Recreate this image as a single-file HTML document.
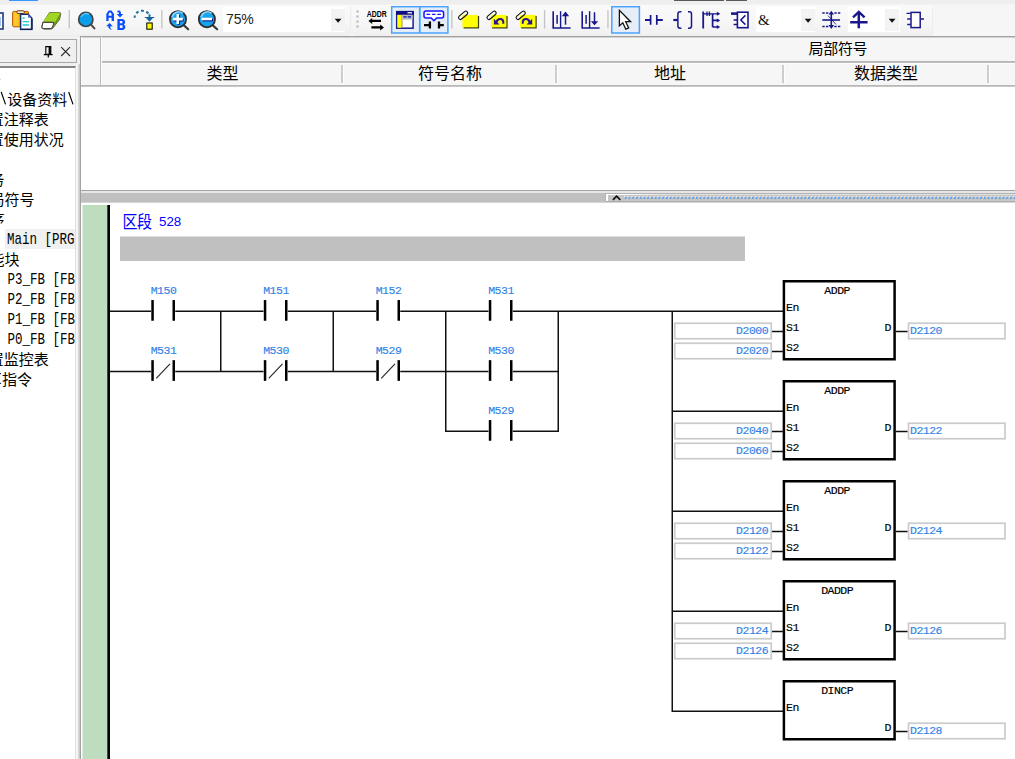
<!DOCTYPE html>
<html><head><meta charset="utf-8"><title>ISPSoft</title>
<style>
html,body{margin:0;padding:0}
body{width:1015px;height:759px;overflow:hidden;position:relative;background:#f0f0f0;font-family:"Liberation Sans",sans-serif}
div{position:absolute;box-sizing:border-box}
svg{position:absolute;left:0;top:0;overflow:hidden}
.tb{top:4.500px;height:30.500px;background:linear-gradient(#fafafa,#f7f7f7 55%,#f0f0f0);border-radius:0 3px 3px 0;box-shadow:1px 1px 1px rgba(0,0,0,.04)}
.cb{top:7px;height:25px;background:#fff}
.cbb{top:9px;height:22px;width:14px;background:#f3f3f3}
</style></head><body>
<!-- top strip -->
<div style="left:0;top:0;width:1015px;height:36px;background:linear-gradient(#eeeeee 0,#efefef 4px,#f6f6f6 5px,#f6f6f6 100%)"></div>
<div style="left:9px;top:0;width:28.500px;height:1.100px;background:#3797ff"></div>
<div style="left:674px;top:0;width:50px;height:1px;background:#5a5a5a"></div>
<div style="left:726px;top:0;width:21px;height:1px;background:#5a5a5a"></div>
<!-- toolbars -->
<div class="tb" style="left:-4px;width:354px"></div>
<div class="tb" style="left:352px;width:580px;border-radius:3px"></div>
<div class="cb" style="left:223px;width:122px"></div><div class="cbb" style="left:331px"></div>
<div class="cb" style="left:756px;width:59px"></div><div class="cbb" style="left:801px"></div>
<div class="cb" style="left:848px;width:52px"></div><div class="cbb" style="left:885px"></div>
<div style="left:226px;top:10px;font-size:14px;line-height:18px;color:#222;letter-spacing:-.1px">75%</div>
<div style="left:758px;top:10px;font-family:'Liberation Serif',serif;font-size:15px;line-height:20px;color:#111">&amp;</div>
<!-- left panel -->
<div style="left:-2px;top:39px;width:79px;height:24px;border:1px solid #a9a9a9;border-right-width:1.500px;border-bottom-width:1.500px;background:#f0f0f0"></div>
<div style="left:-2px;top:66px;width:78px;height:700px;background:#fff;border-top:2px solid #868686;border-right:1px solid #e0e0e0"></div>
<!-- main table panel -->
<div style="left:76.300px;top:64px;width:3.700px;height:700px;background:linear-gradient(90deg,#f8f8f8 0,#f6f6f6 1.400px,#d6d6d6 2.600px,#c6c6c6 3.700px)"></div>
<div style="left:80px;top:36px;width:940px;height:155px;background:#fff;border:1px solid #a2a2a2"></div>
<div style="left:81px;top:37px;width:934px;height:48px;background:#f6f6f6;border-top:1px solid #d2d2d2"></div>
<div style="left:100px;top:37px;width:1px;height:48px;background:#bdbdbd"></div>
<div style="left:100px;top:61px;width:915px;height:2px;background:linear-gradient(#b2b2b2,#c4c4c4)"></div><div style="left:101px;top:63px;width:914px;height:1px;background:#fcfcfc"></div><div style="left:101px;top:37px;width:1px;height:48px;background:#fdfdfd"></div><div style="left:81px;top:37px;width:1px;height:48px;background:#fdfdfd"></div>
<div style="left:81px;top:85px;width:934px;height:2px;background:linear-gradient(#b0b0b0,#cfcfcf)"></div>
<div style="left:341.4px;top:65px;width:1.800px;height:18px;background:#cdcdcd"></div><div style="left:343.2px;top:65px;width:1px;height:18px;background:#fdfdfd"></div>
<div style="left:555.4px;top:65px;width:1.800px;height:18px;background:#cdcdcd"></div><div style="left:557.2px;top:65px;width:1px;height:18px;background:#fdfdfd"></div>
<div style="left:782.4px;top:65px;width:1.800px;height:18px;background:#cdcdcd"></div><div style="left:784.2px;top:65px;width:1px;height:18px;background:#fdfdfd"></div>
<div style="left:987.4px;top:65px;width:1.800px;height:18px;background:#cdcdcd"></div><div style="left:989.2px;top:65px;width:1px;height:18px;background:#fdfdfd"></div>
<!-- splitter -->
<div style="left:81px;top:191px;width:934px;height:2px;background:#e6e6e6"></div>
<div style="left:81px;top:193px;width:934px;height:9px;background:#c0c0c0"></div>
<div style="left:605px;top:192.500px;width:420px;height:10.700px;background:#c6c6c6;border-top:1px solid #b2b2b2;border-left:1px solid #b2b2b2;border-bottom:2px solid #b0b0b0"></div>
<div style="left:606px;top:193.600px;width:414px;height:1.300px;background:linear-gradient(90deg,#fff,#fff 14px,#e2e2e2 60px)"></div>
<div style="left:606px;top:193.600px;width:1.900px;height:7.500px;background:#fff"></div>
<!-- ladder panel -->
<div style="left:80px;top:36px;width:1px;height:730px;background:#a2a2a2;z-index:3"></div>
<div style="left:80px;top:202px;width:940px;height:560px;background:#fff;border-left:1px solid #a2a2a2;border-top:1px solid #d4d4d4"></div>
<svg width="1015" height="759" viewBox="0 0 1015 759"><defs><pattern id="dots" x="623.9" y="196" width="3.740" height="4" patternUnits="userSpaceOnUse"><rect x="0" y="0.100" width="1.500" height="1.500" fill="#f6f6f6"/><rect x=".800" y=".900" width="1.700" height="2.100" fill="#5a9fe8"/></pattern></defs>
<rect x="623.900" y="196" width="392" height="4" fill="url(#dots)"/>
<svg x="0" y="68" width="75" height="691" viewBox="0 68 75 691"><path d="M1.200 92l4.300 12.400M68.700 92l4.300 12.400" stroke="#000" stroke-width="1.150"/><text x="7.30" y="104.70" font-family="'Liberation Sans','Noto Sans CJK SC',sans-serif" font-size="15" fill="#000">设备资料</text><rect x="0" y="78.800" width=".8" height="1.200" fill="#ccc"/><text x="-11.30" y="124.70" font-family="'Liberation Sans','Noto Sans CJK SC',sans-serif" font-size="15" fill="#000">置注释表</text><text x="-11.30" y="144.70" font-family="'Liberation Sans','Noto Sans CJK SC',sans-serif" font-size="15" fill="#000">置使用状况</text><text x="-10.50" y="184.70" font-family="'Liberation Sans','Noto Sans CJK SC',sans-serif" font-size="15" fill="#000">务</text><text x="-10.50" y="204.70" font-family="'Liberation Sans','Noto Sans CJK SC',sans-serif" font-size="15" fill="#000">局符号</text><text x="-10.50" y="224.70" font-family="'Liberation Sans','Noto Sans CJK SC',sans-serif" font-size="15" fill="#000">序</text><rect x="5" y="229" width="70" height="20" fill="#f0f0f0"/><text x="7.00" y="244.20" font-family="'Liberation Mono'" font-size="16.600" textLength="67.50" lengthAdjust="spacingAndGlyphs" fill="#000">Main [PRG</text><text x="-10.50" y="264.70" font-family="'Liberation Sans','Noto Sans CJK SC',sans-serif" font-size="15" fill="#000">能块</text><text x="7.50" y="284.20" font-family="'Liberation Mono'" font-size="16.600" textLength="67.50" lengthAdjust="spacingAndGlyphs" fill="#000">P3_FB [FB</text><text x="7.50" y="304.20" font-family="'Liberation Mono'" font-size="16.600" textLength="67.50" lengthAdjust="spacingAndGlyphs" fill="#000">P2_FB [FB</text><text x="7.50" y="324.20" font-family="'Liberation Mono'" font-size="16.600" textLength="67.50" lengthAdjust="spacingAndGlyphs" fill="#000">P1_FB [FB</text><text x="7.50" y="344.20" font-family="'Liberation Mono'" font-size="16.600" textLength="67.50" lengthAdjust="spacingAndGlyphs" fill="#000">P0_FB [FB</text><text x="-11.30" y="364.70" font-family="'Liberation Sans','Noto Sans CJK SC',sans-serif" font-size="15" fill="#000">置监控表</text><text x="-5.50" y="384.20" font-family="'Liberation Mono'" font-size="16.600" textLength="7.50" lengthAdjust="spacingAndGlyphs" fill="#000">I</text><text x="2.00" y="384.70" font-family="'Liberation Sans','Noto Sans CJK SC',sans-serif" font-size="15" fill="#000">指令</text></svg>
<g><text x="808.50" y="54.20" font-family="'Liberation Sans','Noto Sans CJK SC',sans-serif" font-size="15" letter-spacing="-0.3" fill="#000">局部符号</text><text x="206.50" y="78.58" font-family="'Liberation Sans','Noto Sans CJK SC',sans-serif" font-size="16" fill="#000">类型</text><text x="418.00" y="78.58" font-family="'Liberation Sans','Noto Sans CJK SC',sans-serif" font-size="16" fill="#000">符号名称</text><text x="654.00" y="78.58" font-family="'Liberation Sans','Noto Sans CJK SC',sans-serif" font-size="16" fill="#000">地址</text><text x="854.00" y="78.58" font-family="'Liberation Sans','Noto Sans CJK SC',sans-serif" font-size="16" fill="#000">数据类型</text></g>
<g><rect x="68.6" y="10" width="1.3" height="18.5" fill="#c3c3c3"/><rect x="161.2" y="10" width="1.3" height="18.5" fill="#c3c3c3"/><rect x="451.2" y="10" width="1.3" height="18.5" fill="#c3c3c3"/><rect x="543.9" y="10" width="1.3" height="18.5" fill="#c3c3c3"/><rect x="607.3" y="10" width="1.3" height="18.5" fill="#c3c3c3"/><rect x="-3" y="13" width="6" height="16" fill="#fff" stroke="#1c3a7a" stroke-width="1.6"/><rect x="-1" y="17" width="2" height="9" fill="#9fc4ee"/><rect x="12.6" y="11.4" width="16" height="15.4" rx="1.5" fill="#ffb400" stroke="#b35a00" stroke-width="1"/><rect x="13.6" y="12.4" width="5" height="13.4" fill="#ffcf40" opacity=".7"/><rect x="16.8" y="10.8" width="7.6" height="2.7" rx="1.2" fill="#f3e6dc" stroke="#7a3b12" stroke-width="1"/><path d="M20.6 14.2h7.4l3.6 3.6v11.4h-11z" fill="#fff" stroke="#16316f" stroke-width="1.5"/><path d="M28 14.2v3.6h3.6z" fill="#5a6ccf"/><path d="M22.6 18h2.2M22.6 21.6h6.4M22.6 25h6.4" stroke="#22c8cf" stroke-width="1.4"/><path d="M20 29.6h12.2v-11" fill="none" stroke="#0c1c4c" stroke-width="1"/><path d="M49.500 12.600h10.200q1.400 0 1 1.600l-1.200 5.400-6.600 8.400q-1 1-2.400 1h-6.400q-3 0-2.200-2.600l1-3.400z" fill="#6f9e14" stroke="#5f6b43" stroke-width="1"/><path d="M49.600 12.800h9.800q1 0 .6 1l-4.800 8h-12z" fill="#a2d622"/><path d="M43 22.400h9.600q1.600.3.900 2l-1 2.600q-.6 1.600-2 1.600h-6.400q-2.600 0-2-2.400z" fill="#fff" stroke="#4a4a4a" stroke-width="1.100"/><line x1="91" y1="24.6" x2="94.4" y2="28.4" stroke="#444" stroke-width="2" stroke-linecap="round"/><circle cx="85.8" cy="19.4" r="7.1" fill="#0d9ee9" stroke="#3f4448" stroke-width="1.7"/><path d="M81 17a5.5 5.5 0 0 1 8-2.6" stroke="#5cc4f6" stroke-width="1.5" fill="none"/><path d="M106.3 21v-7l2.4-3.6h2.8l2.5 3.600v7h-2.400v-3.200h-3v3.200zM108.600 15.800h3v-1.700l-1-1.600h-1l-1 1.600z" fill="#0a4dff" fill-rule="evenodd"/><path d="M117.4 19h5.600l2 1.800v2.400l-1.200 1.200 1.400 1.300v2.600l-2 1.700h-5.800zM119.800 21v2.300h2.600v-2.300zM119.800 25.300v2.700h2.800v-2.700z" fill="#0a4dff" fill-rule="evenodd"/><path d="M117.500 10.600h2l1.400 1.500v2h2.400l-3.300 3.400-3.300-3.400h2.200v-1.500h-1.400z" fill="#0a4dff"/><path d="M113.800 29.800h-2l-1.400-1.500v-2h2.400l-3.300-3.400-3.300 3.400h2.200v1.500l2.400 2z" fill="#0a4dff"/><path d="M134.600 17.800C135 9 147.500 8.500 149.800 16" fill="none" stroke="#1b6fa8" stroke-width="2" stroke-dasharray="2.800 2.600" stroke-dashoffset=".5"/><path d="M149.500 14.300v3.200" stroke="#1b6fa8" stroke-width="1.900"/><path d="M144.800 17h9.400v1h-1.300l-3.400 3.800-3.400-3.800h-1.300z" fill="#17639c"/><rect x="146.800" y="23" width="5.400" height="6.200" fill="#ffff00" stroke="#111" stroke-width="1.100"/><line x1="184.2" y1="25.6" x2="188.2" y2="29.2" stroke="#3a3a3a" stroke-width="2.2" stroke-linecap="round"/><circle cx="178.0" cy="19.2" r="8.1" fill="#16a4ee" stroke="#2e2e2e" stroke-width="1.8"/><path d="M172.2 17.2a6.400 6.400 0 0 1 10.500-3.800" stroke="#8fd8fb" stroke-width="1.600" fill="none"/><path d="M173.6 20.1h10M178.8 14.8v10" stroke="#06108c" stroke-width="2.600"/><path d="M172.8 19.1h10M177.8 14.0v10" stroke="#fff" stroke-width="2.600"/><line x1="213.1" y1="25.6" x2="217.1" y2="29.2" stroke="#3a3a3a" stroke-width="2.2" stroke-linecap="round"/><circle cx="206.9" cy="19.2" r="8.1" fill="#16a4ee" stroke="#2e2e2e" stroke-width="1.8"/><path d="M201.1 17.2a6.400 6.400 0 0 1 10.500-3.800" stroke="#8fd8fb" stroke-width="1.600" fill="none"/><path d="M202.5 20.1h10.500" stroke="#06108c" stroke-width="2.600"/><path d="M201.5 19.0h10.500" stroke="#fff" stroke-width="2.600"/><rect x="356.2" y="10.4" width="2.600" height="2.200" fill="#c2c2c2"/><rect x="356.2" y="15.4" width="2.600" height="2.200" fill="#c2c2c2"/><rect x="356.2" y="20.4" width="2.600" height="2.200" fill="#c2c2c2"/><rect x="356.2" y="25.4" width="2.600" height="2.200" fill="#c2c2c2"/><text x="366.800" y="17.400" font-family="'Liberation Sans'" font-weight="bold" font-size="8.200" textLength="20" lengthAdjust="spacingAndGlyphs" fill="#000">ADDR</text><path d="M368.400 20.900l3.800-3v1.800h8.800v2.400h-8.800v1.800zM384 27.400l-3.800-3v1.800h-8.800v2.400h8.800v1.800z" fill="#000"/><rect x="391.700" y="6.700" width="56.200" height="26.300" fill="#e4edf8" stroke="#4ba3fb" stroke-width="1.500"/><rect x="418.900" y="6.700" width="1.800" height="26.300" fill="#4ba3fb"/><rect x="611.800" y="6.700" width="27.600" height="26.300" fill="#e4edf8" stroke="#4ba3fb" stroke-width="1.500"/><rect x="396.700" y="11.600" width="16.400" height="16.600" fill="#fff" stroke="#1c1c8a" stroke-width="1.500"/><rect x="396" y="11" width="17.800" height="3.800" fill="#10107c"/><rect x="407.500" y="12" width="4.500" height="1.500" fill="#d8d8f0"/><rect x="397.600" y="15" width="4" height="12.600" fill="#ffff00"/><rect x="401.600" y="15" width=".8" height="12.600" fill="#8a7a20"/><rect x="402.600" y="15" width="10" height="4.600" fill="#b8b8b8"/><rect x="403.400" y="16" width="3.200" height="1.700" fill="#2a3ac0"/><rect x="407.800" y="16" width="3.200" height="1.700" fill="#2a3ac0"/><path d="M426 10.900h15.600q2 0 2 2v3q0 2-2 2h-5l-2.700 2.800-2.700-2.800h-5.200q-2 0-2-2v-3q0-2 2-2z" fill="#fff" stroke="#1616ff" stroke-width="1.500"/><path d="M426.500 14.400h15.500" stroke="#1616ff" stroke-width="1.300" stroke-dasharray="3.600 1.800"/><path d="M424 25.100h5M429.900 21.600v7M439 21.600v7M440 25.100h3.800" stroke="#000" stroke-width="2.300"/><rect x="463.6" y="16" width="15.500" height="12.500" fill="#3c3c0c"/><rect x="462.4" y="14.900" width="15.500" height="12.400" fill="#ffff00"/><rect x="457.7" y="13.400" width="10.800" height="3.800" rx="1.900" transform="rotate(-40 463.1 15.300)" fill="none" stroke="#111" stroke-width="1.100"/><rect x="492.1" y="16" width="15.500" height="12.500" fill="#3c3c0c"/><rect x="490.9" y="14.900" width="15.500" height="12.400" fill="#ffff00"/><rect x="486.2" y="13.400" width="10.800" height="3.800" rx="1.900" transform="rotate(-40 491.6 15.300)" fill="none" stroke="#111" stroke-width="1.100"/><path d="M493.9 18.800v5.800h5.600z" fill="#2a168c"/><path d="M496.8 22.200A3.300 3.300 0 0 1 503.3 21.500V23.800" fill="none" stroke="#2a168c" stroke-width="2"/><rect x="521.2" y="16" width="15.500" height="12.500" fill="#3c3c0c"/><rect x="520.0" y="14.900" width="15.500" height="12.400" fill="#ffff00"/><rect x="515.3" y="13.400" width="10.800" height="3.800" rx="1.900" transform="rotate(-40 520.7 15.300)" fill="none" stroke="#111" stroke-width="1.100"/><path d="M532.2 18.800v5.800h-5.600z" fill="#2a168c"/><path d="M529.3 22.200A3.300 3.300 0 0 0 522.8 21.500V23.800" fill="none" stroke="#2a168c" stroke-width="2"/><path d="M553.2 11.200v16.800h17.400" fill="none" stroke="#18188c" stroke-width="1.600"/><path d="M557.1 15v8.700" stroke="#18188c" stroke-width="1.500"/><path d="M560.6 11.200v16.800" stroke="#18188c" stroke-width="1.400"/><path d="M565.5 14v10.700" stroke="#18188c" stroke-width="1.500"/><path d="M561.8 16.300l3.700-4.900 3.700 4.900z" fill="#18188c"/><path d="M582.2 11.200v16.800h17.400" fill="none" stroke="#18188c" stroke-width="1.600"/><path d="M586.1 15v8.700" stroke="#18188c" stroke-width="1.500"/><path d="M589.6 11.200v16.800" stroke="#18188c" stroke-width="1.400"/><path d="M594.5 12.300v10" stroke="#18188c" stroke-width="1.500"/><path d="M590.8 21.300l3.700 4 3.700-4z" fill="#18188c"/><path d="M619.400 10.300v15.600l3.400-3.100 3 6.400 2.900-1.300-3-6.200h4.900z" fill="#fff" stroke="#111" stroke-width="1.300" stroke-linejoin="miter"/><path d="M645 20h5.500M657 20h5.800" stroke="#18188c" stroke-width="2.200"/><path d="M650.600 15v9.700M656.800 15v9.700" stroke="#18188c" stroke-width="1.700"/><path d="M673.300 20h4.400" stroke="#18188c" stroke-width="2.200"/><path d="M681.400 11.800h-1.300q-2.200 0-2.200 2.200v12q0 2.200 2.200 2.200h1.300M688 11.800h1.300q2.200 0 2.200 2.200v12q0 2.200-2.200 2.200h-1.300" fill="none" stroke="#18188c" stroke-width="1.500"/><path d="M703.200 11.500v17" stroke="#18188c" stroke-width="1.800"/><path d="M703.200 13.800h16M707 11.600v4.400M709.400 11.600v4.400" stroke="#18188c" stroke-width="1.300"/><path d="M712.600 13.800v13.400M712.600 20.400h6M712.600 27h6" fill="none" stroke="#18188c" stroke-width="1.700"/><path d="M716.800 11.800l3.400 2-3.400 2zM716.800 18.400l3.400 2-3.400 2zM716.800 25l3.400 2-3.400 2z" fill="#18188c"/><rect x="737.400" y="12.200" width="10.600" height="15.500" fill="#fff" stroke="#18188c" stroke-width="1.600"/><path d="M731 13.600h6" stroke="#18188c" stroke-width="2.600"/><path d="M733.600 20h3.600M733.600 24.500h3.600" stroke="#18188c" stroke-width="1.300"/><path d="M745.400 15.400l-4.600 4.600 4.600 4.600" fill="none" stroke="#18188c" stroke-width="1.500"/><path d="M822.300 12.900h6M834.300 12.900h6M822.300 26.600h6M834.300 26.600h6" stroke="#18188c" stroke-width="1.500" stroke-dasharray="2.400 1.200"/><path d="M822.300 20h17.700" stroke="#18188c" stroke-width="1.600"/><path d="M831.300 13v14" stroke="#18188c" stroke-width="1.600"/><path d="M828.500 14.600l2.800-3.900 2.800 3.900zM828.500 25l2.800 3.900 2.800-3.900z" fill="#18188c"/><path d="M828 15.600l8 8.800" stroke="#18188c" stroke-width=".9"/><path d="M850.200 22.300h17.400M858.800 12.500v15.700" stroke="#18188c" stroke-width="2.500"/><path d="M853 17.400l5.800-5.600 5.800 5.600" fill="none" stroke="#18188c" stroke-width="2.300"/><rect x="911" y="12.400" width="9.200" height="15.200" fill="#fff" stroke="#18188c" stroke-width="1.500"/><path d="M906.500 13.400h4M907.200 19h3.400M907.200 24.500h3.400M921 19h3" stroke="#18188c" stroke-width="1.300"/><path d="M334.700 18.700h6.800l-3.400 4z" fill="#111"/><path d="M804.700 18.700h6.800l-3.400 4z" fill="#111"/><path d="M888.700 18.700h6.800l-3.400 4z" fill="#111"/></g>
<path d="M612.900 199.800l3.700-3.600 3.700 3.600" fill="none" stroke="#111" stroke-width="1.800"/>
<!-- pin + close -->
<path d="M45.800 46.600h5v7.600h-5z" fill="none" stroke="#000" stroke-width="1.100"/><rect x="48.600" y="46.600" width="2.200" height="7.600" fill="#000"/><path d="M43.800 54.600h8.800M48.300 55v2.600" stroke="#000" stroke-width="1.200"/>
<path d="M61.200 47.200l8.800 8.800M70 47.200l-8.800 8.800" stroke="#2a2a2a" stroke-width="1.100"/>
<g><rect x="82.50" y="205.00" width="24.90" height="560.00" fill="#bedcbe"/><rect x="107.30" y="205.00" width="2.70" height="560.00" fill="#000"/><text transform="translate(122.60 228.31) scale(1 1.16)" font-family="'Liberation Sans','Noto Sans CJK SC',sans-serif" font-size="15" letter-spacing="-0.6" fill="#0000ff">区段</text><text x="159.00" y="226.30" font-family="'Liberation Sans'" font-size="13.33" fill="#0000ff" text-anchor="start">528</text><rect x="120.00" y="236.50" width="625.00" height="24.50" fill="#c0c0c0"/><line x1="110.00" y1="311.30" x2="151.00" y2="311.30" stroke="#111" stroke-width="1.5"/><rect x="151.30" y="300.05" width="2.50" height="20.70" fill="#000"/><rect x="172.50" y="300.05" width="2.50" height="20.70" fill="#000"/><text transform="translate(150.70 293.80) scale(1 1)" font-family="'Liberation Mono'" font-size="11.5" fill="#2f82e6" text-anchor="start" letter-spacing="-0.501" stroke="#2f82e6" stroke-width=".15">M150</text><line x1="175.25" y1="311.30" x2="263.50" y2="311.30" stroke="#111" stroke-width="1.5"/><rect x="263.80" y="300.05" width="2.50" height="20.70" fill="#000"/><rect x="285.00" y="300.05" width="2.50" height="20.70" fill="#000"/><text transform="translate(263.20 293.80) scale(1 1)" font-family="'Liberation Mono'" font-size="11.5" fill="#2f82e6" text-anchor="start" letter-spacing="-0.501" stroke="#2f82e6" stroke-width=".15">M151</text><line x1="287.75" y1="311.30" x2="376.00" y2="311.30" stroke="#111" stroke-width="1.5"/><rect x="376.30" y="300.05" width="2.50" height="20.70" fill="#000"/><rect x="397.50" y="300.05" width="2.50" height="20.70" fill="#000"/><text transform="translate(375.70 293.80) scale(1 1)" font-family="'Liberation Mono'" font-size="11.5" fill="#2f82e6" text-anchor="start" letter-spacing="-0.501" stroke="#2f82e6" stroke-width=".15">M152</text><line x1="400.25" y1="311.30" x2="488.50" y2="311.30" stroke="#111" stroke-width="1.5"/><rect x="488.80" y="300.05" width="2.50" height="20.70" fill="#000"/><rect x="510.00" y="300.05" width="2.50" height="20.70" fill="#000"/><text transform="translate(488.20 293.80) scale(1 1)" font-family="'Liberation Mono'" font-size="11.5" fill="#2f82e6" text-anchor="start" letter-spacing="-0.501" stroke="#2f82e6" stroke-width=".15">M531</text><line x1="512.75" y1="311.30" x2="783.00" y2="311.30" stroke="#111" stroke-width="1.5"/><line x1="110.00" y1="371.40" x2="151.00" y2="371.40" stroke="#111" stroke-width="1.5"/><rect x="151.30" y="360.15" width="2.50" height="20.70" fill="#000"/><rect x="172.50" y="360.15" width="2.50" height="20.70" fill="#000"/><line x1="156.25" y1="378.30" x2="170.00" y2="363.80" stroke="#222" stroke-width="1.1"/><text transform="translate(150.70 353.90) scale(1 1)" font-family="'Liberation Mono'" font-size="11.5" fill="#2f82e6" text-anchor="start" letter-spacing="-0.501" stroke="#2f82e6" stroke-width=".15">M531</text><line x1="175.25" y1="371.40" x2="263.50" y2="371.40" stroke="#111" stroke-width="1.5"/><rect x="263.80" y="360.15" width="2.50" height="20.70" fill="#000"/><rect x="285.00" y="360.15" width="2.50" height="20.70" fill="#000"/><line x1="268.75" y1="378.30" x2="282.50" y2="363.80" stroke="#222" stroke-width="1.1"/><text transform="translate(263.20 353.90) scale(1 1)" font-family="'Liberation Mono'" font-size="11.5" fill="#2f82e6" text-anchor="start" letter-spacing="-0.501" stroke="#2f82e6" stroke-width=".15">M530</text><line x1="287.75" y1="371.40" x2="376.00" y2="371.40" stroke="#111" stroke-width="1.5"/><rect x="376.30" y="360.15" width="2.50" height="20.70" fill="#000"/><rect x="397.50" y="360.15" width="2.50" height="20.70" fill="#000"/><line x1="381.25" y1="378.30" x2="395.00" y2="363.80" stroke="#222" stroke-width="1.1"/><text transform="translate(375.70 353.90) scale(1 1)" font-family="'Liberation Mono'" font-size="11.5" fill="#2f82e6" text-anchor="start" letter-spacing="-0.501" stroke="#2f82e6" stroke-width=".15">M529</text><line x1="400.25" y1="371.40" x2="488.50" y2="371.40" stroke="#111" stroke-width="1.5"/><rect x="488.80" y="360.15" width="2.50" height="20.70" fill="#000"/><rect x="510.00" y="360.15" width="2.50" height="20.70" fill="#000"/><text transform="translate(488.20 353.90) scale(1 1)" font-family="'Liberation Mono'" font-size="11.5" fill="#2f82e6" text-anchor="start" letter-spacing="-0.501" stroke="#2f82e6" stroke-width=".15">M530</text><line x1="512.75" y1="371.40" x2="558.25" y2="371.40" stroke="#111" stroke-width="1.5"/><line x1="445.00" y1="431.30" x2="488.50" y2="431.30" stroke="#111" stroke-width="1.5"/><line x1="512.75" y1="431.30" x2="559.00" y2="431.30" stroke="#111" stroke-width="1.5"/><rect x="488.80" y="420.05" width="2.50" height="20.70" fill="#000"/><rect x="510.00" y="420.05" width="2.50" height="20.70" fill="#000"/><text transform="translate(488.20 413.80) scale(1 1)" font-family="'Liberation Mono'" font-size="11.5" fill="#2f82e6" text-anchor="start" letter-spacing="-0.501" stroke="#2f82e6" stroke-width=".15">M529</text><line x1="220.75" y1="311.30" x2="220.75" y2="371.40" stroke="#111" stroke-width="1.5"/><line x1="333.25" y1="311.30" x2="333.25" y2="371.40" stroke="#111" stroke-width="1.5"/><line x1="445.75" y1="311.30" x2="445.75" y2="432.05" stroke="#111" stroke-width="1.5"/><line x1="558.25" y1="311.30" x2="558.25" y2="432.05" stroke="#111" stroke-width="1.5"/><line x1="672.25" y1="311.30" x2="672.25" y2="712.00" stroke="#111" stroke-width="1.5"/><rect x="783.90" y="281.25" width="110.70" height="78.00" fill="#fff" stroke="#000" stroke-width="2.5"/><text transform="translate(837.15 293.80) scale(1 1)" font-family="'Liberation Mono'" font-size="11.5" fill="#000" text-anchor="middle" letter-spacing="-0.501" stroke="#000" stroke-width=".15">ADDP</text><text transform="translate(786.00 311.00) scale(1 1)" font-family="'Liberation Mono'" font-size="11.5" fill="#000" text-anchor="start" letter-spacing="-0.501" stroke="#000" stroke-width=".15">En</text><text transform="translate(786.00 331.00) scale(1 1)" font-family="'Liberation Mono'" font-size="11.5" fill="#000" text-anchor="start" letter-spacing="-0.501" stroke="#000" stroke-width=".15">S1</text><text transform="translate(786.00 351.00) scale(1 1)" font-family="'Liberation Mono'" font-size="11.5" fill="#000" text-anchor="start" letter-spacing="-0.501" stroke="#000" stroke-width=".15">S2</text><rect x="674.75" y="323.25" width="96.50" height="15.50" fill="#fff" stroke="#cbcbcb" stroke-width="1.7"/><line x1="772.00" y1="331.50" x2="783.50" y2="331.50" stroke="#111" stroke-width="1.5"/><text transform="translate(768.10 333.75) scale(1 1)" font-family="'Liberation Mono'" font-size="11.5" fill="#2f82e6" text-anchor="end" letter-spacing="-0.501" stroke="#2f82e6" stroke-width=".15">D2000</text><rect x="674.75" y="343.25" width="96.50" height="15.50" fill="#fff" stroke="#cbcbcb" stroke-width="1.7"/><line x1="772.00" y1="351.50" x2="783.50" y2="351.50" stroke="#111" stroke-width="1.5"/><text transform="translate(768.10 353.75) scale(1 1)" font-family="'Liberation Mono'" font-size="11.5" fill="#2f82e6" text-anchor="end" letter-spacing="-0.501" stroke="#2f82e6" stroke-width=".15">D2020</text><text transform="translate(884.50 331.00) scale(1 1)" font-family="'Liberation Mono'" font-size="11.5" fill="#000" text-anchor="start" letter-spacing="-0.501" stroke="#000" stroke-width=".15">D</text><line x1="896.00" y1="331.50" x2="907.75" y2="331.50" stroke="#111" stroke-width="1.5"/><rect x="908.50" y="323.25" width="96.50" height="15.50" fill="#fff" stroke="#cbcbcb" stroke-width="1.7"/><text transform="translate(910.00 333.75) scale(1 1)" font-family="'Liberation Mono'" font-size="11.5" fill="#2f82e6" text-anchor="start" letter-spacing="-0.501" stroke="#2f82e6" stroke-width=".15">D2120</text><line x1="672.25" y1="411.25" x2="783.00" y2="411.25" stroke="#111" stroke-width="1.5"/><rect x="783.90" y="381.25" width="110.70" height="78.00" fill="#fff" stroke="#000" stroke-width="2.5"/><text transform="translate(837.15 393.80) scale(1 1)" font-family="'Liberation Mono'" font-size="11.5" fill="#000" text-anchor="middle" letter-spacing="-0.501" stroke="#000" stroke-width=".15">ADDP</text><text transform="translate(786.00 411.00) scale(1 1)" font-family="'Liberation Mono'" font-size="11.5" fill="#000" text-anchor="start" letter-spacing="-0.501" stroke="#000" stroke-width=".15">En</text><text transform="translate(786.00 431.00) scale(1 1)" font-family="'Liberation Mono'" font-size="11.5" fill="#000" text-anchor="start" letter-spacing="-0.501" stroke="#000" stroke-width=".15">S1</text><text transform="translate(786.00 451.00) scale(1 1)" font-family="'Liberation Mono'" font-size="11.5" fill="#000" text-anchor="start" letter-spacing="-0.501" stroke="#000" stroke-width=".15">S2</text><rect x="674.75" y="423.25" width="96.50" height="15.50" fill="#fff" stroke="#cbcbcb" stroke-width="1.7"/><line x1="772.00" y1="431.50" x2="783.50" y2="431.50" stroke="#111" stroke-width="1.5"/><text transform="translate(768.10 433.75) scale(1 1)" font-family="'Liberation Mono'" font-size="11.5" fill="#2f82e6" text-anchor="end" letter-spacing="-0.501" stroke="#2f82e6" stroke-width=".15">D2040</text><rect x="674.75" y="443.25" width="96.50" height="15.50" fill="#fff" stroke="#cbcbcb" stroke-width="1.7"/><line x1="772.00" y1="451.50" x2="783.50" y2="451.50" stroke="#111" stroke-width="1.5"/><text transform="translate(768.10 453.75) scale(1 1)" font-family="'Liberation Mono'" font-size="11.5" fill="#2f82e6" text-anchor="end" letter-spacing="-0.501" stroke="#2f82e6" stroke-width=".15">D2060</text><text transform="translate(884.50 431.00) scale(1 1)" font-family="'Liberation Mono'" font-size="11.5" fill="#000" text-anchor="start" letter-spacing="-0.501" stroke="#000" stroke-width=".15">D</text><line x1="896.00" y1="431.50" x2="907.75" y2="431.50" stroke="#111" stroke-width="1.5"/><rect x="908.50" y="423.25" width="96.50" height="15.50" fill="#fff" stroke="#cbcbcb" stroke-width="1.7"/><text transform="translate(910.00 433.75) scale(1 1)" font-family="'Liberation Mono'" font-size="11.5" fill="#2f82e6" text-anchor="start" letter-spacing="-0.501" stroke="#2f82e6" stroke-width=".15">D2122</text><line x1="672.25" y1="511.25" x2="783.00" y2="511.25" stroke="#111" stroke-width="1.5"/><rect x="783.90" y="481.25" width="110.70" height="78.00" fill="#fff" stroke="#000" stroke-width="2.5"/><text transform="translate(837.15 493.80) scale(1 1)" font-family="'Liberation Mono'" font-size="11.5" fill="#000" text-anchor="middle" letter-spacing="-0.501" stroke="#000" stroke-width=".15">ADDP</text><text transform="translate(786.00 511.00) scale(1 1)" font-family="'Liberation Mono'" font-size="11.5" fill="#000" text-anchor="start" letter-spacing="-0.501" stroke="#000" stroke-width=".15">En</text><text transform="translate(786.00 531.00) scale(1 1)" font-family="'Liberation Mono'" font-size="11.5" fill="#000" text-anchor="start" letter-spacing="-0.501" stroke="#000" stroke-width=".15">S1</text><text transform="translate(786.00 551.00) scale(1 1)" font-family="'Liberation Mono'" font-size="11.5" fill="#000" text-anchor="start" letter-spacing="-0.501" stroke="#000" stroke-width=".15">S2</text><rect x="674.75" y="523.25" width="96.50" height="15.50" fill="#fff" stroke="#cbcbcb" stroke-width="1.7"/><line x1="772.00" y1="531.50" x2="783.50" y2="531.50" stroke="#111" stroke-width="1.5"/><text transform="translate(768.10 533.75) scale(1 1)" font-family="'Liberation Mono'" font-size="11.5" fill="#2f82e6" text-anchor="end" letter-spacing="-0.501" stroke="#2f82e6" stroke-width=".15">D2120</text><rect x="674.75" y="543.25" width="96.50" height="15.50" fill="#fff" stroke="#cbcbcb" stroke-width="1.7"/><line x1="772.00" y1="551.50" x2="783.50" y2="551.50" stroke="#111" stroke-width="1.5"/><text transform="translate(768.10 553.75) scale(1 1)" font-family="'Liberation Mono'" font-size="11.5" fill="#2f82e6" text-anchor="end" letter-spacing="-0.501" stroke="#2f82e6" stroke-width=".15">D2122</text><text transform="translate(884.50 531.00) scale(1 1)" font-family="'Liberation Mono'" font-size="11.5" fill="#000" text-anchor="start" letter-spacing="-0.501" stroke="#000" stroke-width=".15">D</text><line x1="896.00" y1="531.50" x2="907.75" y2="531.50" stroke="#111" stroke-width="1.5"/><rect x="908.50" y="523.25" width="96.50" height="15.50" fill="#fff" stroke="#cbcbcb" stroke-width="1.7"/><text transform="translate(910.00 533.75) scale(1 1)" font-family="'Liberation Mono'" font-size="11.5" fill="#2f82e6" text-anchor="start" letter-spacing="-0.501" stroke="#2f82e6" stroke-width=".15">D2124</text><line x1="672.25" y1="611.25" x2="783.00" y2="611.25" stroke="#111" stroke-width="1.5"/><rect x="783.90" y="581.25" width="110.70" height="78.00" fill="#fff" stroke="#000" stroke-width="2.5"/><text transform="translate(837.15 593.80) scale(1 1)" font-family="'Liberation Mono'" font-size="11.5" fill="#000" text-anchor="middle" letter-spacing="-0.501" stroke="#000" stroke-width=".15">DADDP</text><text transform="translate(786.00 611.00) scale(1 1)" font-family="'Liberation Mono'" font-size="11.5" fill="#000" text-anchor="start" letter-spacing="-0.501" stroke="#000" stroke-width=".15">En</text><text transform="translate(786.00 631.00) scale(1 1)" font-family="'Liberation Mono'" font-size="11.5" fill="#000" text-anchor="start" letter-spacing="-0.501" stroke="#000" stroke-width=".15">S1</text><text transform="translate(786.00 651.00) scale(1 1)" font-family="'Liberation Mono'" font-size="11.5" fill="#000" text-anchor="start" letter-spacing="-0.501" stroke="#000" stroke-width=".15">S2</text><rect x="674.75" y="623.25" width="96.50" height="15.50" fill="#fff" stroke="#cbcbcb" stroke-width="1.7"/><line x1="772.00" y1="631.50" x2="783.50" y2="631.50" stroke="#111" stroke-width="1.5"/><text transform="translate(768.10 633.75) scale(1 1)" font-family="'Liberation Mono'" font-size="11.5" fill="#2f82e6" text-anchor="end" letter-spacing="-0.501" stroke="#2f82e6" stroke-width=".15">D2124</text><rect x="674.75" y="643.25" width="96.50" height="15.50" fill="#fff" stroke="#cbcbcb" stroke-width="1.7"/><line x1="772.00" y1="651.50" x2="783.50" y2="651.50" stroke="#111" stroke-width="1.5"/><text transform="translate(768.10 653.75) scale(1 1)" font-family="'Liberation Mono'" font-size="11.5" fill="#2f82e6" text-anchor="end" letter-spacing="-0.501" stroke="#2f82e6" stroke-width=".15">D2126</text><text transform="translate(884.50 631.00) scale(1 1)" font-family="'Liberation Mono'" font-size="11.5" fill="#000" text-anchor="start" letter-spacing="-0.501" stroke="#000" stroke-width=".15">D</text><line x1="896.00" y1="631.50" x2="907.75" y2="631.50" stroke="#111" stroke-width="1.5"/><rect x="908.50" y="623.25" width="96.50" height="15.50" fill="#fff" stroke="#cbcbcb" stroke-width="1.7"/><text transform="translate(910.00 633.75) scale(1 1)" font-family="'Liberation Mono'" font-size="11.5" fill="#2f82e6" text-anchor="start" letter-spacing="-0.501" stroke="#2f82e6" stroke-width=".15">D2126</text><line x1="672.25" y1="711.25" x2="783.00" y2="711.25" stroke="#111" stroke-width="1.5"/><rect x="783.90" y="681.25" width="110.70" height="58.00" fill="#fff" stroke="#000" stroke-width="2.5"/><text transform="translate(837.15 693.80) scale(1 1)" font-family="'Liberation Mono'" font-size="11.5" fill="#000" text-anchor="middle" letter-spacing="-0.501" stroke="#000" stroke-width=".15">DINCP</text><text transform="translate(786.00 711.00) scale(1 1)" font-family="'Liberation Mono'" font-size="11.5" fill="#000" text-anchor="start" letter-spacing="-0.501" stroke="#000" stroke-width=".15">En</text><text transform="translate(884.50 731.00) scale(1 1)" font-family="'Liberation Mono'" font-size="11.5" fill="#000" text-anchor="start" letter-spacing="-0.501" stroke="#000" stroke-width=".15">D</text><line x1="896.00" y1="731.50" x2="907.75" y2="731.50" stroke="#111" stroke-width="1.5"/><rect x="908.50" y="723.25" width="96.50" height="15.50" fill="#fff" stroke="#cbcbcb" stroke-width="1.7"/><text transform="translate(910.00 733.75) scale(1 1)" font-family="'Liberation Mono'" font-size="11.5" fill="#2f82e6" text-anchor="start" letter-spacing="-0.501" stroke="#2f82e6" stroke-width=".15">D2128</text></g>
</svg>
</body></html>
